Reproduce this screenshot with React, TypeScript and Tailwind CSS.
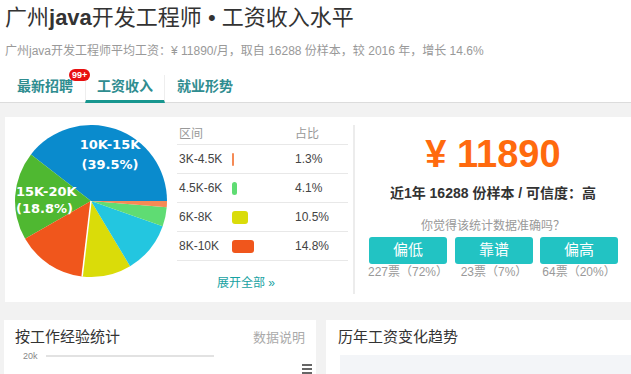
import React from "react";

const sans = "font-['Liberation_Sans','Noto_Sans_CJK_SC',sans-serif]";

const cx = 86;
const cy = 84;
const r = 76;

// slices, counter-clockwise from 3 o'clock, in percent
const slices = [
  { pct: 39.5, color: "#0a8bcd" },
  { pct: 18.8, color: "#4fb831" },
  { pct: 14.8, color: "#f0561c" },
  { pct: 10.5, color: "#dadc09" },
  { pct: 11.0, color: "#23c6e0" },
  { pct: 4.1, color: "#5fdc73" },
  { pct: 1.3, color: "#f58a55" },
];

const point = (deg: number) => {
  const a = (deg * Math.PI) / 180;
  return [cx + r * Math.cos(a), cy - r * Math.sin(a)];
};

function Pie() {
  let start = 0;
  return (
    <svg width="172" height="185" className="shrink-0">
      {slices.map((s, i) => {
        const end = start + (s.pct / 100) * 360;
        const [x1, y1] = point(start);
        const [x2, y2] = point(end);
        const large = end - start > 180 ? 1 : 0;
        const d = `M${cx},${cy} L${x1},${y1} A${r},${r} 0 ${large} 0 ${x2},${y2} Z`;
        start = end;
        return <path key={i} d={d} fill={s.color} />;
      })}
      {(() => {
        const [x, y] = point(263.3);
        return <line x1={cx} y1={cy} x2={x} y2={y} stroke="#fff" strokeWidth="1.5" />;
      })()}
      <g
        fill="#fff"
        fontWeight="bold"
        fontSize="13"
        fontFamily="DejaVu Sans, sans-serif"
      >
        <text x="105" y="32" textAnchor="middle">10K-15K</text>
        <text x="105" y="52" textAnchor="middle">(39.5%)</text>
        <text x="11" y="79">15K-20K</text>
        <text x="11" y="96">(18.8%)</text>
      </g>
    </svg>
  );
}

const rows = [
  { range: "3K-4.5K", w: "w-[2px]", color: "bg-[#f58a55]", pct: "1.3%" },
  { range: "4.5K-6K", w: "w-[5px]", color: "bg-[#5fdc73]", pct: "4.1%" },
  { range: "6K-8K", w: "w-[16px]", color: "bg-[#dadc09]", pct: "10.5%" },
  { range: "8K-10K", w: "w-[22px]", color: "bg-[#f0561c]", pct: "14.8%" },
];

export default function App() {
  return (
    <div className={`w-[631px] h-[374px] overflow-hidden bg-[#f2f2f2] ${sans}`}>
      <div className="bg-white h-[103px] border-b border-[#dcdcdc] pl-[5px]">
        <h1 className="pt-[4px] text-[22px] leading-[28px] text-[#333] whitespace-nowrap">
          广州<b>java</b>开发工程师 • 工资收入水平
        </h1>
        <p className="mt-[11px] text-[12px] leading-[16px] text-[#999] whitespace-nowrap">
          广州java开发工程师平均工资：¥ 11890/月，取自 16288 份样本，较 2016 年，增长 14.6%
        </p>
        <div className="mt-[16px] flex text-[14px] font-bold text-[#2f8d90]">
          <div className="relative w-[80px] h-[28px] flex justify-center items-start pt-[1px]">
            最新招聘
            <span className="absolute left-[64px] top-[-6px] bg-[#e81010] text-white text-[9px] leading-[12px] font-bold rounded-full px-[3px]">
              99+
            </span>
          </div>
          <div className="w-[80px] h-[28px] flex justify-center items-start pt-[1px] border-x border-[#eee] border-b-[3px] border-b-[#17968f]">
            工资收入
          </div>
          <div className="w-[80px] h-[28px] flex justify-center items-start pt-[1px]">
            就业形势
          </div>
        </div>
      </div>

      <div className="mt-[14px] ml-[5px] h-[185px] bg-white flex">
        <Pie />
        <div className="w-[171px] pt-[7px] flex flex-col">
          <div className="flex h-[21px] items-center text-[12px] text-[#999] border-b border-[#e8e8e8] px-[2px]">
            <span className="w-[116px]">区间</span>
            <span>占比</span>
          </div>
          {rows.map((row) => (
            <div
              key={row.range}
              className="flex h-[29px] items-center text-[12px] text-[#444] border-b border-[#e8e8e8] px-[2px]"
            >
              <span className="w-[53px]">{row.range}</span>
              <span className="w-[63px]">
                <span className={`block h-[13px] rounded-[3px] ${row.w} ${row.color}`} />
              </span>
              <span>{row.pct}</span>
            </div>
          ))}
          <div className="mt-[13px] pl-[40px] text-[12px] text-[#17a2a2]">展开全部 »</div>
        </div>
        <div className="ml-[5px] my-[8px] border-l-2 border-[#ececec]" />
        <div className="flex-1 flex flex-col items-center pt-[18px]">
          <div className="text-[38px] leading-[38px] font-bold text-[#ff6a0e]">¥ 11890</div>
          <div className="mt-[11px] text-[14px] leading-[18px] font-bold text-[#333]">
            近1年 16288 份样本 / 可信度：高
          </div>
          <div className="mt-[16px] text-[12px] leading-[16px] text-[#999]">你觉得该统计数据准确吗？</div>
          <div className="mt-[3px] flex gap-[7px]">
            {[
              ["偏低", "227票（72%）"],
              ["靠谱", "23票（7%）"],
              ["偏高", "64票（20%）"],
            ].map(([label, votes]) => (
              <div key={label} className="flex flex-col items-center">
                <div className="w-[78px] h-[27px] rounded-[3px] bg-[#22c3c3] text-white text-[15px] flex items-center justify-center">
                  {label}
                </div>
                <div className="text-[12px] leading-[16px] text-[#999]">{votes}</div>
              </div>
            ))}
          </div>
        </div>
      </div>

      <div className="mt-[18px] ml-[4px] flex gap-[10px]">
        <div className="w-[312px] h-[60px] bg-white px-[11px] pt-[6px]">
          <div className="flex justify-between items-center">
            <span className="text-[15px] text-[#333]">按工作经验统计</span>
            <span className="text-[13px] text-[#aaa]">数据说明</span>
          </div>
          <div className="mt-[1px] flex items-center">
            <span className="ml-[8px] text-[9px] text-[#888]">20k</span>
            <span className="ml-[8px] w-[168px] h-[2px] bg-[#e2e2e2]" />
          </div>
          <div className="flex justify-end mt-[1px] -mr-[7px]">
            <div className="flex flex-col gap-[2px]">
              <span className="block w-[10px] h-[2px] bg-[#666]" />
              <span className="block w-[10px] h-[2px] bg-[#666]" />
              <span className="block w-[10px] h-[2px] bg-[#666]" />
            </div>
          </div>
        </div>
        <div className="flex-1 h-[60px] bg-white pl-[12px] pt-[6px]">
          <div className="text-[15px] text-[#333]">历年工资变化趋势</div>
          <div className="mt-[6px] ml-[2px] h-[30px] bg-[#f3f5f8]" />
        </div>
      </div>
    </div>
  );
}
